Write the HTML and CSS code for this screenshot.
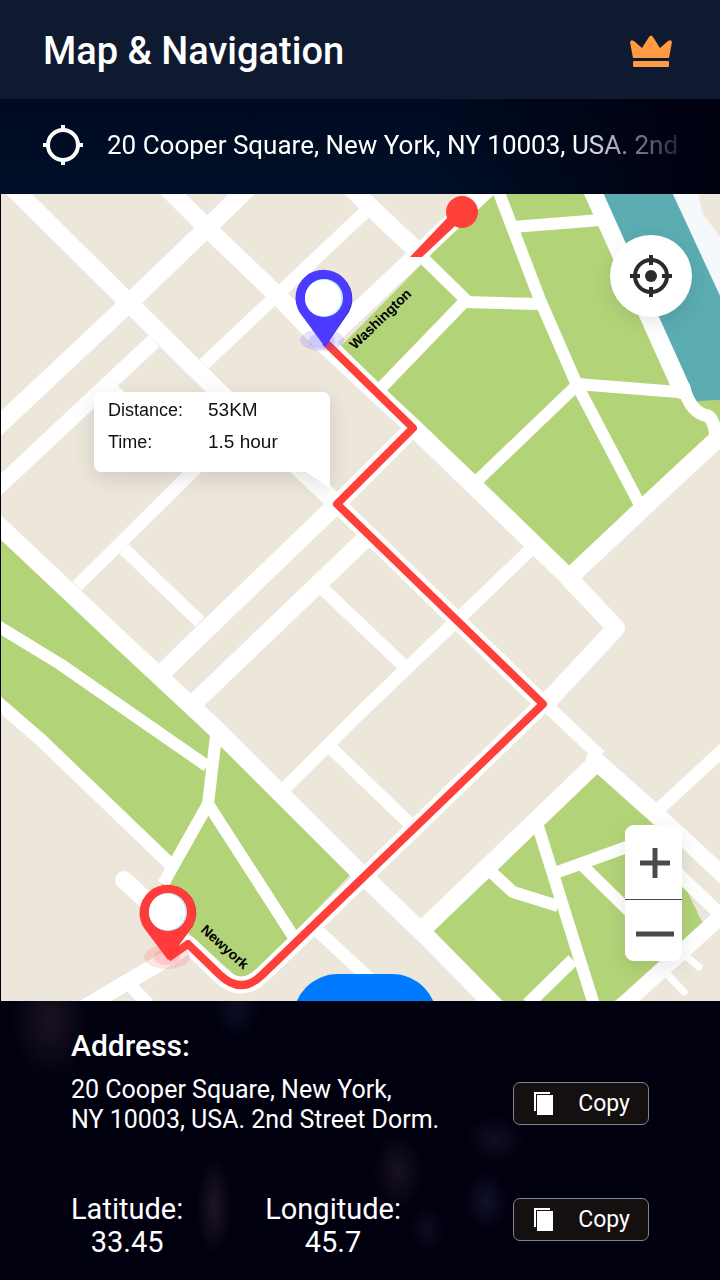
FILE: index.html
```
<!DOCTYPE html>
<html lang="en">
<head>
    <meta charset="UTF-8">
    <meta name="viewport" content="width=device-width, initial-scale=1.0">
    <title>Map & Navigation</title>
    <link rel="stylesheet" href="styles.css">
</head>
<body>
    <header class="header">
        <h1 class="title">Map &amp; Navigation</h1>
        <button class="icon-button" type="button" aria-label="Premium">
            <svg class="crown" viewBox="0 0 42 33">
                <path d="M0 7 Q1 4 4 6 L12 13 L19 2 Q21 -1 23 2 L30 13 L38 6 Q41 4 42 7 L39 23 H3 Z"/>
                <rect x="3" y="26" width="36" height="6" rx="1"/>
            </svg>
        </button>
    </header>

    <div class="location-bar">
        <svg class="target" viewBox="0 0 40 40">
            <circle cx="20" cy="20" r="15"/>
            <path d="M20 0 V6 M20 34 V40 M0 20 H6 M34 20 H40"/>
        </svg>
        <p class="location-text">20 Cooper Square, New York, NY 10003, USA. 2nd</p>
    </div>

    <main class="map">
        <svg class="map-canvas" viewBox="1 194 719 807" preserveAspectRatio="xMidYMid slice">
            <!-- parks -->
            <g class="park">
                <path d="M490 190 H600 L692 402 L724 425 L568 577 L340 347 L424 262 Z"/>
                <path d="M0 532 L212 738 L352 873 L252 976 L238 978 L185 930 L160 890 L170 860 L0 703 Z"/>
                <path d="M599 765 L660 825 L682 880 L700 918 Q706 926 704 932 L690 948 L610 1004 H505 L430 931 Z"/>
            </g>

            <!-- river and its bank -->
            <path class="bank" d="M660 190 H698 L702 213 L724 242 V310 L670 194 Z"/>
            <path class="river" d="M600 190 H671 L722 300 V404 L694 410 Z"/>
            <path class="park" d="M692 403 Q700 400 724 400 V422 L716 424 Z"/>

            <!-- main streets -->
            <g class="road w18">
                <path d="M10 185 L129 303 L219 392 L337 504"/>
                <path d="M165 186 L207 228 L277 295 L325 345 L414 428 L468 480 L564 573 L616 628 L547 702"/>
                <path d="M250 186 L207 228 L129 303 L-5 429"/>
                <path d="M325 342 L413 259 L490 186"/>
                <path d="M350 187 L381 217 L416 250"/>
                <path d="M-5 522 L115 635 L217 730 L353 866 L427 937 L495 1006"/>
                <path d="M337 504 L204 632 L166 669"/>
                <path d="M362 542 L197 700"/>
                <path d="M597 762 L424 928"/>
                <path d="M595 760 L660 818"/>
                <path d="M572 575 L673 480 L728 429"/>
                <path d="M592 190 L682 390"/>
                <path d="M124 880 L165 918"/>
            </g>
            <g class="road w15">
                <path d="M154 341 L-5 490"/>
                <path d="M170 957 L80 1010"/>
                <path d="M655 812 L728 880"/>
                <path d="M728 910 L622 1006"/>
            </g>

            <!-- side streets -->
            <g class="road w12">
                <path d="M364 213 L277 295 L204 364"/>
                <path d="M111 388 L145 420"/>
                <path d="M230 435 L184 480 L77 586"/>
                <path d="M124 549 L200 622"/>
                <path d="M322 588 L403 665"/>
                <path d="M530 550 L450 627 L360 713 L285 788"/>
                <path d="M330 747 L410 824"/>
                <path d="M317 930 L376 985"/>
                <path d="M547 706 L600 756"/>
                <path d="M660 808 L726 747"/>
                <path d="M125 980 L148 1004"/>
                <path d="M-4 701 L41 740 L170 864"/>
                <path d="M573 960 L528 1004"/>
                <path d="M672 868 L728 922"/>
                <path d="M683 385 Q690 413 708 416 Q714 420 716 436"/>
            </g>

            <!-- dead ends -->
            <path class="road lane" d="M667 974 L684 992 M686 956 L699 967"/>

            <!-- park paths -->
            <g class="road w11">
                <path d="M422 257 L466 300 L382 387"/>
                <path d="M466 302 L540 304"/>
                <path d="M498 190 L540 300 L577 385 L640 505"/>
                <path d="M513 227 L600 220"/>
                <path d="M577 384 L678 392"/>
                <path d="M577 385 L478 480"/>
                <path d="M-4 625 L60 664 L207 766"/>
                <path d="M216 736 L208 804 L163 884"/>
                <path d="M208 804 L293 936"/>
                <path d="M536 820 L595 1008"/>
                <path d="M555 873 L635 844"/>
                <path d="M581 864 L632 914"/>
                <path d="M489 870 L513 892 L558 906"/>
            </g>

            <!-- route -->
            <path class="route-case" d="M325 342 L413 428 L337 504 L543 704 L262 975 Q241 995 220 975 L188 944 L168 958"/>
            <path class="route" d="M325 342 L413 428 L337 504 L543 704 L262 975 Q241 995 220 975 L188 944 L168 958"/>
            <path class="route-end" d="M449 216 L456 225 L422 257 H410 Z"/>
            <circle class="route-end" cx="462" cy="212" r="16"/>

            <!-- start pin -->
            <g class="pin-blue">
                <ellipse class="pin-halo" cx="322" cy="340" rx="22" ry="11"/>
                <ellipse class="pin-halo" cx="322" cy="341" rx="13" ry="8"/>
                <path class="pin-shade" d="M325 347 L349 312 A28 28 0 0 0 333 272 Z"/>
                <path class="pin-body" d="M325 347 L300 313 A28 28 0 1 1 347 313 Z"/>
                <circle class="pin-glass" cx="324" cy="298" r="19"/>
                <circle class="pin-hole" cx="323" cy="298" r="18"/>
            </g>

            <!-- destination pin -->
            <g class="pin-red">
                <ellipse class="pin-halo" cx="167" cy="957" rx="23" ry="12"/>
                <ellipse class="pin-halo" cx="167" cy="957" rx="13" ry="8"/>
                <path class="pin-shade" d="M168 960 L193 926 A28 28 0 0 0 176 886 Z"/>
                <path class="pin-body" d="M168 960 L144 928 A28 28 0 1 1 191 928 Z"/>
                <circle class="pin-glass" cx="168" cy="912" r="19"/>
                <circle class="pin-hole" cx="167" cy="912" r="18"/>
            </g>

            <text class="map-label" transform="translate(355 350) rotate(-44)">Washington</text>
            <text class="map-label" transform="translate(200 931) rotate(42)">Newyork</text>
        </svg>

        <dl class="trip">
            <dt>Distance:</dt>
            <dd>53KM</dd>
            <dt>Time:</dt>
            <dd>1.5 hour</dd>
        </dl>

        <button class="locate" type="button" aria-label="My location">
            <svg viewBox="0 0 42 42">
                <circle class="ring" cx="21" cy="21" r="16"/>
                <path class="ring" d="M21 0 V10 M21 32 V42 M0 21 H10 M32 21 H42"/>
                <circle cx="21" cy="21" r="6"/>
            </svg>
        </button>

        <div class="zoom">
            <button class="zoom-in" type="button" aria-label="Zoom in">
                <svg viewBox="0 0 38 32"><path d="M4 16 H34 M19 1 V31"/></svg>
            </button>
            <button class="zoom-out" type="button" aria-label="Zoom out">
                <svg viewBox="0 0 38 32"><path d="M0 16 H38"/></svg>
            </button>
        </div>

        <button class="start" type="button" aria-label="Start"></button>
    </main>

    <footer class="details">
        <section class="row">
            <div>
                <h2 class="address-title">Address:</h2>
                <address class="address">20 Cooper Square, New York,<br>NY 10003, USA. 2nd Street Dorm.</address>
            </div>
            <button class="copy" type="button">
                <svg viewBox="0 0 20 23">
                    <path class="copy-back" d="M1 19 V1 H16"/>
                    <rect x="3" y="3" width="16" height="20"/>
                </svg>
                Copy
            </button>
        </section>
        <section class="row row-coords">
            <dl class="coords">
                <div>
                    <dt>Latitude:</dt>
                    <dd>33.45</dd>
                </div>
                <div>
                    <dt>Longitude:</dt>
                    <dd>45.7</dd>
                </div>
            </dl>
            <button class="copy" type="button">
                <svg viewBox="0 0 20 23">
                    <path class="copy-back" d="M1 19 V1 H16"/>
                    <rect x="3" y="3" width="16" height="20"/>
                </svg>
                Copy
            </button>
        </section>
    </footer>
</body>
</html>
```
FILE: styles.css
```
* {
    box-sizing: border-box;
}
body {
    display: flex;
    flex-direction: column;
    min-height: 100vh;
    margin: 0;
    background-color: #00000f;
    color: white;
    font-family: Roboto, sans-serif;
}
h1, h2, p, dl, dd {
    margin: 0;
}
button {
    padding: 0;
    border: none;
    font-family: inherit;
    color: inherit;
    cursor: pointer;
}
svg {
    display: block;
}

/* Header */
.header {
    display: flex;
    align-items: center;
    justify-content: space-between;
    padding: 29px 48px 26px 43px;
    background-color: #0f1a30;
}
.title {
    font-size: 38px;
    line-height: 44px;
    font-weight: 500;
}
.icon-button {
    background: none;
}
.crown {
    width: 42px;
    height: 33px;
    fill: #ff9a43;
}
.location-bar {
    display: flex;
    align-items: center;
    gap: 24px;
    padding: 26px 43px 29px;
    background: linear-gradient(to right, transparent 60%, #00000f), linear-gradient(#000a20, #001028);
}
.target {
    flex: none;
    width: 40px;
    height: 40px;
    fill: none;
    stroke: white;
    stroke-width: 4;
}
.location-text {
    flex: 1;
    overflow: hidden;
    white-space: nowrap;
    font-size: 26px;
    line-height: 40px;
    mask-image: linear-gradient(to right, black 82%, rgba(0, 0, 0, 0.15));
}

/* Map */
.map {
    position: relative;
    flex: 1;
    min-height: 480px;
    margin-left: 1px;
    overflow: hidden;
    background-color: #ece6db;
}
.map-canvas {
    position: absolute;
    width: 100%;
    height: 100%;
}
.park {
    fill: #b3d378;
}
.river {
    fill: #5badb2;
}
.bank {
    fill: #f6f9fb;
}
.road {
    fill: none;
    stroke: white;
    stroke-linejoin: round;
}
.w18 {
    stroke-width: 18;
    stroke-linecap: round;
}
.w15 {
    stroke-width: 16;
}
.w12 {
    stroke-width: 13;
}
.w11 {
    stroke-width: 12;
}
.lane {
    stroke-width: 7;
    stroke-linecap: round;
}
.route, .route-case {
    fill: none;
    stroke: #ff3f39;
    stroke-width: 8;
    stroke-linejoin: round;
}
.route-case {
    stroke: white;
    stroke-width: 17;
}
.route-end {
    fill: #ff3f39;
}
.pin-halo {
    opacity: 0.15;
}
.pin-blue {
    fill: #4b3aff;
}
.pin-red {
    fill: #ff3b3b;
}
.pin-blue .pin-shade {
    fill: #3829cf;
}
.pin-red .pin-shade {
    fill: #d42f42;
}
.pin-glass {
    fill: #c4f3ff;
}
.pin-hole {
    fill: white;
}
.map-label {
    fill: black;
    font: bold 14px "Liberation Sans", Arial, sans-serif;
}
.trip {
    position: absolute;
    top: 198px;
    left: 93px;
    display: grid;
    grid-template-columns: 86px 1fr;
    gap: 0 14px;
    width: 236px;
    padding: 2px 14px 14px;
    border-radius: 7px 7px 0 7px;
    background-color: white;
    color: #111;
    font-family: "Liberation Sans", Arial, sans-serif;
    font-size: 19px;
    line-height: 32px;
    filter: drop-shadow(0 6px 10px rgba(0, 0, 0, 0.12));
}
.trip dt {
    font-size: 18px;
}
.trip::after {
    content: "";
    position: absolute;
    top: 100%;
    right: 0;
    width: 24px;
    height: 16px;
    background-color: white;
    clip-path: polygon(0 0, 100% 0, 100% 100%);
}
.locate {
    position: absolute;
    top: 41px;
    right: 28px;
    display: grid;
    place-items: center;
    width: 82px;
    height: 82px;
    border-radius: 50%;
    background-color: white;
    box-shadow: 0 6px 20px rgba(0, 0, 0, 0.1);
}
.locate svg {
    width: 42px;
    height: 42px;
    fill: #2b2b2b;
}
.locate .ring {
    fill: none;
    stroke: #2b2b2b;
    stroke-width: 4;
}
.zoom {
    position: absolute;
    right: 38px;
    bottom: 40px;
    display: flex;
    flex-direction: column;
    width: 57px;
    border-radius: 9px;
    overflow: hidden;
    background-color: white;
    box-shadow: 0 6px 20px rgba(0, 0, 0, 0.1);
}
.zoom button {
    display: grid;
    place-items: center;
    background-color: white;
}
.zoom svg {
    width: 38px;
    height: 32px;
    fill: none;
    stroke: #4a4a4a;
    stroke-width: 5;
}
.zoom .zoom-in {
    height: 75px;
    padding: 2px 0 0 3px;
    border-bottom: 1px solid #4a4a4a;
}
.zoom .zoom-out {
    height: 61px;
    padding: 6px 0 0 3px;
}
.start {
    position: absolute;
    bottom: -63px;
    left: 50%;
    width: 144px;
    height: 90px;
    margin-left: -68px;
    border-radius: 50px;
    background-color: #007aff;
}

/* Details */
.details {
    display: flex;
    flex-direction: column;
    gap: 58px;
    padding: 26px 71px 21px;
    background:
        radial-gradient(ellipse 40px 60px at 50px 20px, rgba(90, 60, 75, 0.3), transparent),
        radial-gradient(ellipse 18px 50px at 214px 205px, rgba(90, 60, 75, 0.35), transparent),
        radial-gradient(ellipse 26px 40px at 398px 170px, rgba(80, 55, 75, 0.3), transparent),
        radial-gradient(ellipse 30px 24px at 495px 138px, rgba(60, 45, 75, 0.3), transparent),
        radial-gradient(ellipse 22px 30px at 486px 200px, rgba(60, 55, 110, 0.3), transparent),
        radial-gradient(ellipse 18px 24px at 427px 228px, rgba(50, 45, 90, 0.25), transparent),
        radial-gradient(ellipse 24px 30px at 237px 8px, rgba(40, 45, 90, 0.3), transparent),
        #00000f;
}
.row {
    display: flex;
    align-items: flex-end;
    justify-content: space-between;
}
.address-title {
    margin-bottom: 10px;
    font-size: 30px;
    line-height: 38px;
    font-weight: 500;
}
.address {
    font-size: 25px;
    line-height: 30px;
    font-style: normal;
}
.coords {
    display: flex;
    gap: 82px;
    font-size: 29px;
    line-height: 33px;
    text-align: center;
}
.copy {
    display: flex;
    align-items: center;
    gap: 24px;
    height: 43px;
    margin-bottom: 10px;
    padding: 0 18px 0 20px;
    border: 1px solid #7d8790;
    border-radius: 7px;
    background-color: #13100f;
    font-size: 23px;
}
.row-coords .copy {
    margin-bottom: 18px;
}
.copy svg {
    width: 20px;
    height: 23px;
    fill: white;
}
.copy .copy-back {
    fill: none;
    stroke: white;
    stroke-width: 2;
}
```
